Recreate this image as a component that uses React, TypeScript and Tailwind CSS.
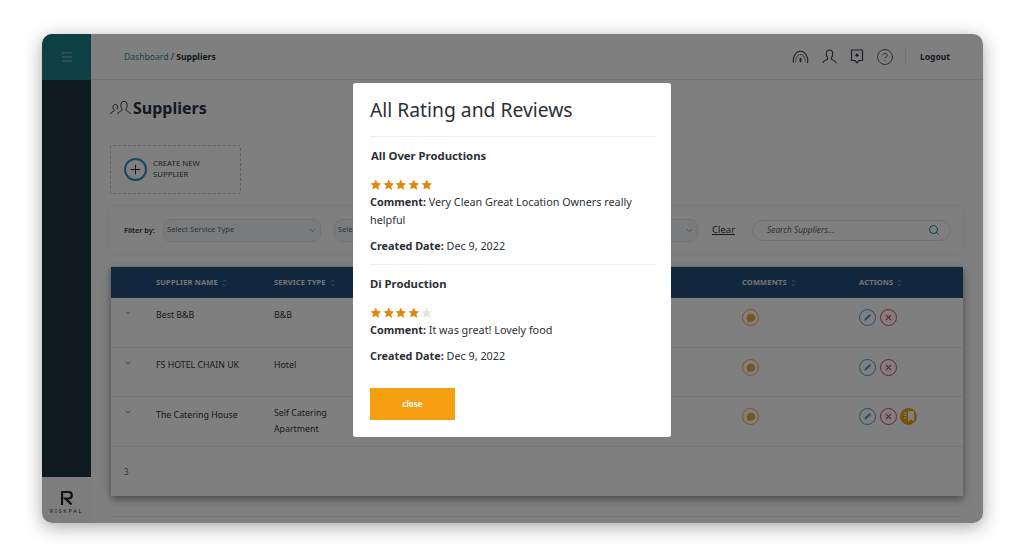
import React from "react";
import { ChevronDown, CircleHelp, Menu, Plus, Search, X } from "lucide-react";

const rows = [
  { name: "Best B&B", type: ["B&B"], extra: false, height: "h-[50px]" },
  { name: "FS HOTEL CHAIN UK", type: ["Hotel"], extra: false, height: "h-[49px]" },
  { name: "The Catering House", type: ["Self Catering", "Apartment"], extra: true, height: "h-[50px]" },
];

function SortIcon() {
  return (
    <svg width="5" height="8" viewBox="0 0 6 9" fill="none" stroke="currentColor" strokeWidth="1" className="ml-1 opacity-60">
      <path d="M1 3l2-2 2 2M1 6l2 2 2-2" />
    </svg>
  );
}

function Star({ on }: { on: boolean }) {
  return (
    <svg width="11.500" height="11.500" viewBox="0 0 24 24" className={on ? "fill-[#dd8a0c]" : "fill-[#e4e4e4]"}>
      <path d="M12 1l3.400 7.300 7.900 1-5.800 5.500 1.500 7.900L12 18l-7 3.700 1.500-7.900L.7 9.300l7.900-1z" />
    </svg>
  );
}

function Stars({ count }: { count: number }) {
  return (
    <div className="flex gap-[1.2px]">
      {[1, 2, 3, 4, 5].map((n) => (
        <Star key={n} on={n <= count} />
      ))}
    </div>
  );
}

function HeaderIcons() {
  return (
    <div className="flex items-center gap-[13px] text-[#3a3f4a]">
      <svg width="17" height="14" viewBox="0 0 17 14" fill="none" stroke="currentColor" strokeWidth="1.1">
        <path d="M1.600 13C.2 8 3.500 1.200 8.500 1.200S16.800 8 15.400 13" />
        <path d="M4 11.500C3.400 8 5.500 4.500 8.500 4.500s5.100 3.500 4.500 7" strokeDasharray="1 0.8" />
        <path d="M8.500 8v4" strokeWidth="1.800" />
      </svg>
      <svg width="15" height="15" viewBox="0 0 15 15" fill="none" stroke="currentColor" strokeWidth="1.1">
        <path d="M.8 14c.4-2.200 2.600-2.800 4.400-3.600.8-.4.6-1.400.1-2C4.300 7 4.200 5.700 4.300 4.200 4.500 2 6 1 7.500 1s3 1 3.200 3.200c.1 1.500 0 2.800-1 4.200-.5.600-.7 1.600.1 2 1.800.8 4 1.400 4.400 3.600" />
      </svg>
      <svg width="14" height="15" viewBox="0 0 14 15" fill="none" stroke="currentColor" strokeWidth="1.200">
        <path d="M1.500 1h11v10.500H9L7 13.800 5 11.500H1.500z" />
        <circle cx="7" cy="6.200" r="1.600" fill="currentColor" stroke="none" />
      </svg>
      <CircleHelp size={18} strokeWidth={1.1} className="-ml-px" />
    </div>
  );
}

function ActionButton({ tone, children }: { tone: string; children: React.ReactNode }) {
  return (
    <span className={`flex h-[17px] w-[17px] items-center justify-center rounded-full border-[1.5px] ${tone}`}>
      {children}
    </span>
  );
}

export default function App() {
  return (
    <div
      className="h-[558px] w-[1024px] overflow-hidden bg-white pl-[42px] pt-[34px]"
      style={{ fontFamily: '"Noto Sans", sans-serif' }}
    >
      <div className="relative flex h-[489px] w-[941px] overflow-hidden rounded-[10px] bg-white shadow-[0_4px_18px_rgba(0,0,0,0.35)]">
        {/* sidebar */}
        <div className="flex w-[49px] shrink-0 flex-col">
          <div className="flex h-[46px] items-center justify-center bg-[#1c7e8a] text-[#b9d3d6]">
            <Menu size={14} strokeWidth={1.3} />
          </div>
          <div className="flex-1 bg-[#1f3442]" />
          <div className="flex h-[46px] flex-col items-center justify-center bg-[#fafafa] pt-1">
            <svg width="12" height="14" viewBox="0 0 12 14" fill="none" stroke="#1b2430" strokeWidth="2.200">
              <path d="M1 14V1h6.500c2 0 3.300 1.400 3.300 3.200S9.500 7.500 7.500 7.500H4.500L10.500 13.500" />
            </svg>
            <span className="mt-[3px] text-[5.500px] leading-[6px] tracking-[0.32em] text-[#333]">RISKPAL</span>
          </div>
        </div>

        {/* main */}
        <div className="flex min-w-0 flex-1 flex-col">
          <div className="flex h-[46px] shrink-0 items-center justify-between border-b border-[#e6e6e6] pl-[33px] pr-[33px]">
            <div className="pt-[2px] text-[8.600px]">
              <span className="text-[#2c8a96]">Dashboard</span>
              <span className="text-[#333]"> / </span>
              <span className="font-bold text-[#27333f]">Suppliers</span>
            </div>
            <div className="flex items-center">
              <HeaderIcons />
              <div className="ml-[11px] mr-[14px] h-[17px] w-px bg-[#e8e8e8]" />
              <span className="w-[30px] pt-[2px] text-[8.500px] font-bold text-[#27333f]">Logout</span>
            </div>
          </div>

          <div className="flex flex-1 flex-col pl-[19px] pr-[20px]">
            <div className="mt-[17px] flex items-center">
              <svg width="23" height="16" viewBox="0 0 23 16" fill="none" stroke="#27333f" strokeWidth="1">
                <path d="M.5 14c.6-1.600 2-2 3.200-2.800.6-.5.400-1.200 0-1.800-.7-1-.8-2-.6-3C3.400 5 4.500 4.400 5.400 4.400S7.300 5 7.500 6.400c.1 1-.1 2-.7 3" />
                <path d="M7.500 14c.8-2 2.800-2.400 4.200-3.400.6-.5.500-1.400 0-2.200-.9-1.200-1-2.800-.8-4.200C11.200 2.300 12.500 1.300 14 1.300s2.900 1 3.100 2.900c.2 1.400 0 3-.8 4.200-.5.800-.6 1.700 0 2.200 1.400 1 3.600 1.400 4.200 3.400" />
              </svg>
              <h1 className="text-[16px] font-bold leading-[22px] text-[#27333f]">Suppliers</h1>
            </div>

            <div className="mt-[26px] flex h-[49px] w-[131px] items-center gap-[6px] rounded-[3px] border border-dashed border-[#c4c4c4] pl-[13px]">
              <span className="flex h-[23px] w-[23px] items-center justify-center rounded-full border-2 border-[#2f8fc4] text-[#1f2a35]">
                <Plus size={15} strokeWidth={1.600} />
              </span>
              <span className="-mt-[2px] text-[7.800px] leading-[11px] text-[#444]">
                CREATE NEW
                <br />
                SUPPLIER
              </span>
            </div>

            <div className="mt-[13px] flex h-[46px] items-center rounded-[3px] bg-white pl-[14px] shadow-[0_0_6px_rgba(0,0,0,0.08)]">
              <span className="w-[39px] shrink-0 text-[7.300px] font-semibold text-[#333]">Filter by:</span>
              <div className="flex h-[23px] w-[158px] shrink-0 items-center justify-between rounded-[8px] border border-[#dfe5ee] bg-[#f4f7fb] pl-[3px] pr-[3px] text-[7.600px] text-[#666]">
                Select Service Type
                <ChevronDown size={9} className="text-[#777]" />
              </div>
              <div className="ml-[13px] flex h-[23px] w-[364px] shrink-0 items-center justify-between rounded-[8px] border border-[#dfe5ee] bg-[#f4f7fb] pl-[3px] pr-[3px] text-[7.600px] text-[#666]">
                Select
                <ChevronDown size={9} className="text-[#777]" />
              </div>
              <span className="ml-[14px] text-[9.500px] text-[#333] underline">Clear</span>
              <div className="ml-[17px] flex h-[21px] w-[199px] items-center justify-between rounded-full border border-[#e3e3e3] pl-[14px] pr-[10px] text-[8.300px] italic text-[#666]">
                Search Suppliers...
                <Search size={12} strokeWidth={2} className="text-[#1c808e]" />
              </div>
            </div>

            <div className="ml-px mt-[14px] flex h-[229px] flex-col bg-white shadow-[0_3px_8px_rgba(0,0,0,0.45)]">
              <div className="grid h-[31px] shrink-0 grid-cols-[45px_118px_468px_117px_1fr] items-center bg-[#234f7c] text-[7.500px] font-bold tracking-[0.02em] text-[#e8e8e8]">
                <span />
                <span className="flex items-center">SUPPLIER NAME<SortIcon /></span>
                <span className="flex items-center">SERVICE TYPE<SortIcon /></span>
                <span className="flex items-center">COMMENTS<SortIcon /></span>
                <span className="flex items-center">ACTIONS<SortIcon /></span>
              </div>
              {rows.map((r) => (
                <div key={r.name} className={`grid shrink-0 grid-cols-[45px_118px_468px_117px_1fr] border-b border-[#e9eef0] pt-[10px] text-[8.800px] text-[#333] ${r.height}`}>
                  <ChevronDown size={8} strokeWidth={3} className="ml-[13px] mt-[1px] text-[#4a90e8]" />
                  <span className={r.extra ? "pt-px leading-[14px]" : "leading-[14px]"}>{r.name}</span>
                  <span className={r.extra ? "-mt-[2px] leading-[16px]" : "leading-[15px]"}>
                    {r.type.map((t) => (
                      <div key={t}>{t}</div>
                    ))}
                  </span>
                  <span className="pt-px">
                    <span className="flex h-[17px] w-[17px] items-center justify-center rounded-full border-[1.5px] border-[#f1a742]">
                      <svg width="10" height="10" viewBox="0 0 10 10" className="fill-[#f1a742]">
                        <path d="M5 .8c2.500 0 4.400 1.800 4.400 4S7.500 8.800 5 8.800c-.6 0-1.100-.1-1.600-.2L1 9.500l.7-2C1 6.800.6 5.800.6 4.800.6 2.600 2.500.8 5 .8z" />
                      </svg>
                    </span>
                  </span>
                  <span className="flex items-start gap-[3.500px] pt-px">
                    <ActionButton tone="border-[#3b9fdc] text-[#3b9fdc]">
                      <svg width="9" height="9" viewBox="0 0 10 10" fill="currentColor">
                        <path d="M1.500 8.500l.6-2.400L6.600 1.600a1 1 0 0 1 1.400 0l.4.400a1 1 0 0 1 0 1.400L3.900 7.900z" />
                      </svg>
                    </ActionButton>
                    <ActionButton tone="border-[#e83e62] text-[#e83e62]">
                      <X size={9} strokeWidth={3} />
                    </ActionButton>
                    {r.extra && (
                      <span className="flex h-[17px] w-[17px] items-center justify-center rounded-full bg-[#f4a118]">
                        <svg width="12" height="11" viewBox="0 0 12 11" fill="none">
                          <path d="M5 0h6v10.500L8 8.500l-3 2z" fill="#fff" />
                          <path d="M.8 2h3M.8 4.500h3M.8 7h3" stroke="#fff" strokeWidth="1" />
                        </svg>
                      </span>
                    )}
                  </span>
                </div>
              ))}
              <div className="flex flex-1 items-center pl-[13px] text-[8px] text-[#666]">3</div>
            </div>
            <div className="mt-[20px] h-px bg-[#eeeeee]" />
          </div>
        </div>

        <div className="absolute inset-0 bg-black/50" />

        {/* reviews modal */}
        <div className="absolute left-[311px] top-[49px] h-[354px] w-[318px] rounded-[3px] bg-white pl-[17px] pr-[16px] text-[#2b2f36]">
          <h2 className="mt-[13px] text-[19.300px] leading-[28px] text-[#2b2f36]">All Rating and Reviews</h2>
          <div className="mt-[12px] h-px bg-[#ececec]" />
          <h3 className="mt-[11px] pl-px text-[11.300px] font-bold leading-[16px]">All Over Productions</h3>
          <div className="mt-[15px]">
            <Stars count={5} />
          </div>
          <p className="mt-[2px] text-[10.800px] leading-[18px]">
            <b>Comment:</b> Very Clean Great Location Owners really helpful
          </p>
          <p className="mt-[8px] text-[10.800px] leading-[18px]">
            <b>Created Date:</b> Dec 9, 2022
          </p>
          <div className="mt-[9px] h-px bg-[#ececec]" />
          <h3 className="mt-[11px] text-[11.300px] font-bold leading-[16px]">Di Production</h3>
          <div className="mt-[15px]">
            <Stars count={4} />
          </div>
          <p className="mt-[3px] text-[10.800px] leading-[18px]">
            <b>Comment:</b> It was great! Lovely food
          </p>
          <p className="mt-[8px] text-[10.800px] leading-[18px]">
            <b>Created Date:</b> Dec 9, 2022
          </p>
          <button className="mt-[23px] flex h-[32px] w-[85px] items-center justify-center bg-[#f59e0f] text-[8px] font-bold text-white">
            close
          </button>
        </div>
      </div>
    </div>
  );
}
